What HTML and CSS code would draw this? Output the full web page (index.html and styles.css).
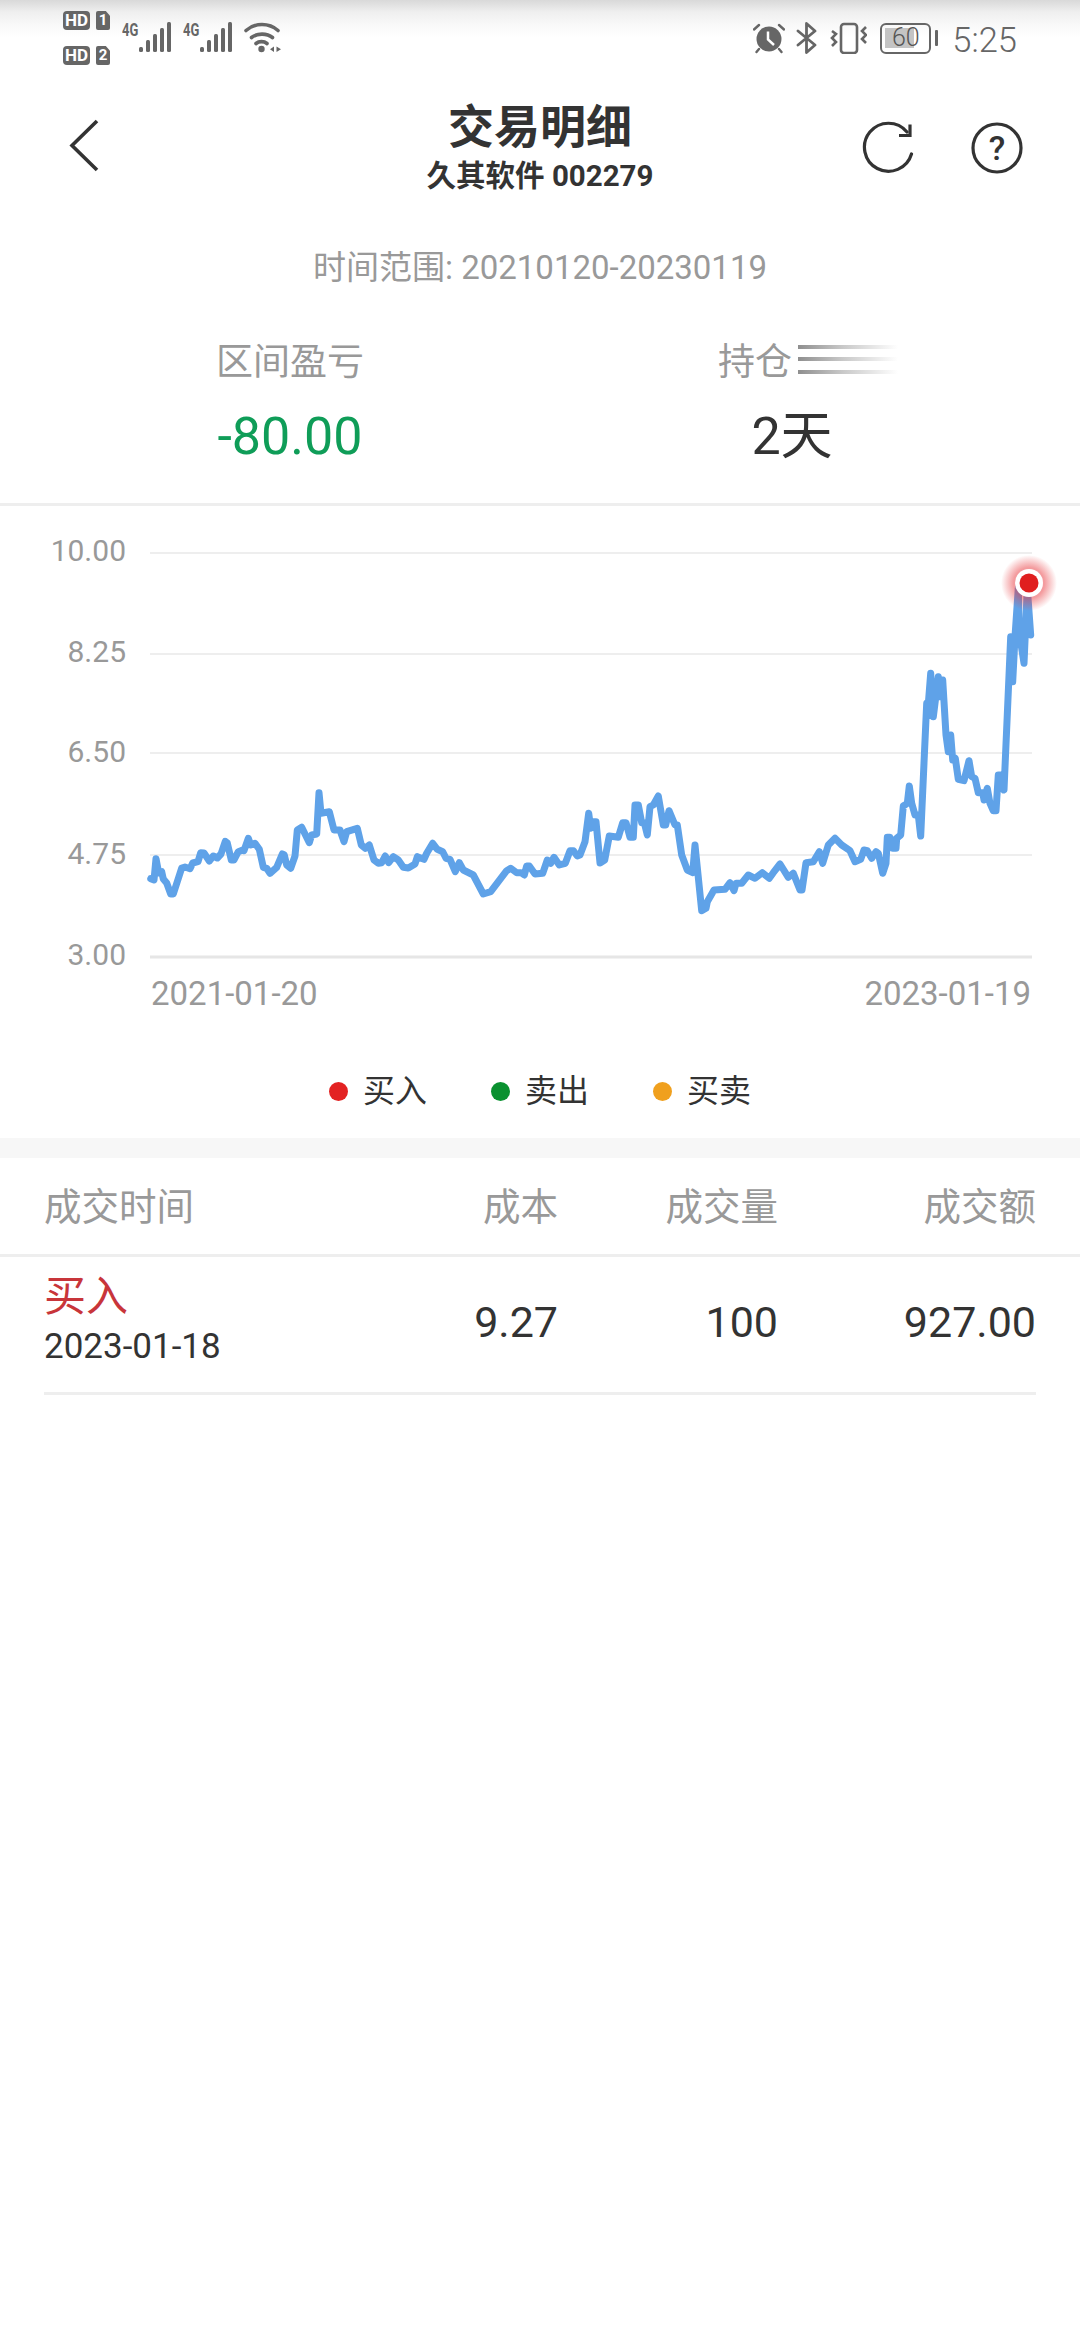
FILE: index.html
```html
<!DOCTYPE html>
<html lang="zh-CN">
<head>
    <meta charset="UTF-8">
    <meta name="viewport" content="width=device-width, initial-scale=1.0">
    <title>交易明细</title>
    <link rel="stylesheet" href="styles.css">
</head>
<body>
    <div class="status-bar">
        <div class="status-left">
            <div class="sims">
                <div class="sim"><span class="hd">HD</span><span class="sim-no">1</span></div>
                <div class="sim"><span class="hd">HD</span><span class="sim-no">2</span></div>
            </div>
            <div class="net">
                <span class="net-type">4G</span>
                <svg class="bars" width="33" height="30" viewBox="0 0 33 30">
                    <rect x="0" y="25" width="4" height="5" rx="1.5"/>
                    <rect x="7" y="18" width="4" height="12" rx="1.5"/>
                    <rect x="14" y="12" width="4" height="18" rx="1.5"/>
                    <rect x="21" y="6" width="4" height="24" rx="1.5"/>
                    <rect x="28" y="0" width="4" height="30" rx="1.5"/>
                </svg>
            </div>
            <div class="net">
                <span class="net-type">4G</span>
                <svg class="bars" width="33" height="30" viewBox="0 0 33 30">
                    <rect x="0" y="25" width="4" height="5" rx="1.5"/>
                    <rect x="7" y="18" width="4" height="12" rx="1.5"/>
                    <rect x="14" y="12" width="4" height="18" rx="1.5"/>
                    <rect x="21" y="6" width="4" height="24" rx="1.5"/>
                    <rect x="28" y="0" width="4" height="30" rx="1.5"/>
                </svg>
            </div>
            <svg class="wifi" width="38" height="31" viewBox="0 0 38 31">
                <path d="M2 8.5C11 .5 25 .5 34 8.5M7.5 15.5C13 11 23 11 28.5 15.5M12 21.5C15 19 20 19 23 21.5" fill="none" stroke="#666" stroke-width="3.6" stroke-linecap="round"/>
                <circle cx="17.5" cy="27" r="3.2" fill="#666"/>
                <path d="M30 24.5V30L26 27.2ZM32.5 24.5V30L37 27.2Z" fill="#666"/>
            </svg>
        </div>
        <div class="status-right">
            <svg width="32" height="32" viewBox="0 0 32 32">
                <circle cx="16" cy="17" r="12.5" fill="#666"/>
                <path d="M15 9.5V17.5L21 23" fill="none" stroke="#fff" stroke-width="2.5"/>
                <path d="M1 7.5L6 3M31 7.5L26 3M6 27L3.5 30M26 27L28.5 30" fill="none" stroke="#666" stroke-width="2.4" stroke-linecap="round"/>
            </svg>
            <svg class="bt" width="22" height="32" viewBox="0 0 22 32">
                <path d="M2 9L19 23L10.5 30.5V1.5L19 9L2 23" fill="none" stroke="#666" stroke-width="2.8" stroke-linejoin="round" stroke-linecap="round"/>
            </svg>
            <svg class="vibrate" width="37" height="32" viewBox="0 0 37 32">
                <rect x="11" y="2" width="16" height="29" rx="3" fill="none" stroke="#666" stroke-width="2.6"/>
                <path d="M2 9L6 12L2 16L6 20L2 24M36 5L32 9L36 13L32 17L36 21" fill="none" stroke="#666" stroke-width="2.6"/>
            </svg>
            <div class="battery">
                <div class="battery-body">
                    <div class="battery-level"></div>
                    <span class="battery-text">60</span>
                </div>
                <div class="battery-tip"></div>
            </div>
            <span class="clock">5:25</span>
        </div>
    </div>

    <header class="nav">
        <div class="nav-left">
            <svg width="32" height="54" viewBox="0 0 32 54">
                <path d="M28 2L3 26.5L28 51" fill="none" stroke="#333" stroke-width="3.6"/>
            </svg>
        </div>
        <div class="nav-title">
            <h1>交易明细</h1>
            <p>久其软件 002279</p>
        </div>
        <div class="nav-right">
            <svg width="54" height="54" viewBox="0 0 54 54">
                <path d="M49.5 33A24 24 0 1 1 45 11" fill="none" stroke="#333" stroke-width="3.2" stroke-linecap="round"/>
                <path d="M37 14.5H48V3.5" fill="none" stroke="#333" stroke-width="3.2"/>
            </svg>
            <svg width="54" height="54" viewBox="0 0 54 54">
                <circle cx="27" cy="27" r="24" fill="none" stroke="#333" stroke-width="3.2"/>
                <text class="help-mark" x="27" y="39">?</text>
            </svg>
        </div>
    </header>

    <p class="range">时间范围: 20210120-20230119</p>

    <section class="stats">
        <div class="stat">
            <div class="stat-label">区间盈亏</div>
            <div class="stat-value down">-80.00</div>
        </div>
        <div class="stat">
            <div class="stat-label">持仓<span class="smear"><i></i><i></i><i></i></span></div>
            <div class="stat-value">2天</div>
        </div>
    </section>

    <section class="chart">
        <svg class="chart-svg" width="1080" height="554" viewBox="0 506 1080 554">
            <defs>
                <radialGradient id="glow">
                    <stop offset="0.55" stop-color="#e8383d" stop-opacity="0.5"/>
                    <stop offset="1" stop-color="#e8383d" stop-opacity="0"/>
                </radialGradient>
            </defs>
            <g class="grid">
                <line x1="150" y1="553" x2="1032" y2="553"/>
                <line x1="150" y1="654" x2="1032" y2="654"/>
                <line x1="150" y1="753" x2="1032" y2="753"/>
                <line x1="150" y1="855" x2="1032" y2="855"/>
                <line class="grid-base" x1="150" y1="957" x2="1032" y2="957"/>
            </g>
            <g class="y-labels">
                <text x="126" y="561">10.00</text>
                <text x="126" y="662">8.25</text>
                <text x="126" y="762">6.50</text>
                <text x="126" y="864">4.75</text>
                <text x="126" y="965">3.00</text>
            </g>
            <text class="x-label" x="151" y="1005">2021-01-20</text>
            <text class="x-label" x="1031" y="1005" text-anchor="end">2023-01-19</text>
            <polyline class="price-line" points="150.7,878.7 154,880 156,858.7 158.7,873 161.7,871.7 163.3,879 166.7,883 170.7,894 173.3,894 181.7,868 185,867 190,868.7 192.7,863 198,861.7 200.7,852.7 204,853 209.3,861 213.3,856 217.3,858 221,854 225.3,841.3 227.3,843 231.3,860 234,860 238.3,851.7 242.7,850 244,850.7 248.3,838.3 250.7,845 255,843.3 259.3,849.3 263.3,867.3 266.7,868.3 270,873.3 276.7,867.3 282.3,854 284.3,855 286.7,865 290.7,868.3 295,856 297.3,830 301.7,827.3 309.3,842.7 311.7,835 316.7,834 319,792.7 321,813.3 329.3,811.7 334,830 340,830 344,841.7 346.7,831.7 357.3,828.3 361.3,845 365.3,848.3 369.3,845 374,860 378.3,863.3 381.7,862.7 385.3,856 388.7,862.7 393.3,856.7 398.3,860 403.3,867.3 408.3,868 415,864 417.3,856.7 424,859.3 426.7,853.3 432.7,843.3 437.3,849.3 442.7,851.7 446,858.3 450,859.3 455.3,871.7 459.3,862.7 463.3,870 473.3,875 483.3,894 490.7,891.7 506.7,870.7 510.7,868.3 516.7,872.7 521,872.7 524.3,875 526.7,866 529.3,866 535,874 542.7,873.3 547.3,860 550.7,863.3 554,857.3 559.3,865 565.3,863.3 570,850.7 573.3,850.7 577.3,856 580,855 585,841.7 588.7,813.3 590.7,828.3 593.3,821.7 596,821.7 600,863 604.7,860 609.3,836 618.3,837.3 622.7,822.7 626,822.7 630,837.3 633.3,837.3 635,805 638.3,805 641.7,822.7 644.3,822.7 647.3,835 650,806.7 653.3,805 658.3,796 663.3,825 665.7,825 669,810.7 675,825 677.3,825 681.7,855 687.3,870 692.7,872.7 695,845 701.7,910.7 706,908.3 707.3,901.7 714,890 725,889.3 730,882.7 734,890.7 736,883.3 741.7,883.3 748.3,875 755,878.3 762.3,872.7 769.3,878.3 773.3,872.7 780,864 788.3,877.3 793.3,873.3 800,890 802,890 806,862.7 813.3,861.7 819.3,851.7 822.7,863.3 828.3,845 835,838.3 841.7,845 850,850.7 855,861.7 860.7,859.3 864,850 867.3,850.7 871.7,858.3 876,851.7 878.3,853.3 882.7,873.3 886,863.3 887.3,837.3 890,837.3 892.7,848.3 896,848.3 896.7,838.3 900.7,835 903.3,806 907.3,803.3 909.3,786 911.7,803.3 915,815 918.3,815 920.7,836 926.7,703.3 927.3,716.7 930.7,673.3 933.3,716.7 938.3,676.7 940,696.7 942.7,680 946,735 948.3,751.7 950.7,735 952.7,760 955.3,758.3 958.3,779.3 964,780.7 969,760.7 971.7,776.7 975,778.3 978.3,792.7 982.7,792.7 984,800 987.3,788.3 990,803.3 993.3,810.7 996,810.7 998.3,775 1001,775 1004,790 1010.7,636.7 1012.7,681.7 1015,636.7 1018.3,588.3 1019.3,633 1024,663.3 1027.3,588 1030.7,635"/>
            <circle cx="1029" cy="583" r="28" fill="url(#glow)"/>
            <circle cx="1029" cy="583" r="14" fill="#fff"/>
            <circle cx="1029" cy="583" r="9.5" fill="#e01f1f"/>
        </svg>
        <div class="legend">
            <span class="legend-item"><i class="dot buy"></i>买入</span>
            <span class="legend-item"><i class="dot sell"></i>卖出</span>
            <span class="legend-item"><i class="dot both"></i>买卖</span>
        </div>
    </section>

    <div class="band"></div>

    <div class="table-head">
        <span>成交时间</span>
        <span class="num">成本</span>
        <span class="num">成交量</span>
        <span class="num">成交额</span>
    </div>
    <div class="table-row">
        <div>
            <div class="trade-type">买入</div>
            <div class="trade-date">2023-01-18</div>
        </div>
        <span class="num">9.27</span>
        <span class="num">100</span>
        <span class="num">927.00</span>
    </div>
</body>
</html>
```

FILE: styles.css
```css
* {
    margin: 0;
    padding: 0;
    box-sizing: border-box;
}

body {
    font-family: Roboto, "Noto Sans CJK SC", sans-serif;
    background-color: #fff;
    color: #333;
    width: 1080px;
    height: 2340px;
    overflow: hidden;
}

/* status bar */
.status-bar {
    height: 76px;
    padding: 11px 63px 0 63px;
    display: flex;
    justify-content: space-between;
    align-items: flex-start;
    background: linear-gradient(#d9d9d9 0, #dedede 3px, #efefef 12px, #f8f8f8 24px, #fff 38px);
}

.status-left {
    display: flex;
    align-items: flex-start;
}

.sims {
    display: flex;
    flex-direction: column;
    gap: 16px;
    margin-right: 12px;
}

.sim {
    display: flex;
    gap: 6px;
}

.hd {
    width: 27px;
    height: 19px;
    border-radius: 4px;
    background-color: #666;
    color: #fff;
    font-size: 17px;
    line-height: 19px;
    font-weight: bold;
    text-align: center;
}

.sim-no {
    width: 14px;
    height: 19px;
    background-color: #666;
    color: #fff;
    font-size: 15px;
    line-height: 19px;
    font-weight: bold;
    text-align: center;
    clip-path: polygon(0 0, 70% 0, 100% 25%, 100% 100%, 0 100%);
    border-radius: 2px;
}

.net {
    display: flex;
    margin-top: 11px;
    margin-right: 11px;
}

.net-type {
    width: 17px;
    margin-top: -1px;
    font-size: 18px;
    line-height: 18px;
    font-weight: bold;
    color: #666;
    transform: scaleX(0.72);
    transform-origin: left top;
}

.bars {
    fill: #666;
}

.wifi {
    margin-top: 11px;
}

.status-right {
    display: flex;
    align-items: center;
    height: 32px;
    margin-top: 11px;
}

.bt {
    margin-left: 11px;
}

.vibrate {
    margin-left: 12px;
}

.battery {
    display: flex;
    align-items: center;
    margin-left: 13px;
}

.battery-body {
    position: relative;
    width: 51px;
    height: 31px;
    border: 2.5px solid #666;
    border-radius: 6px;
}

.battery-level {
    width: 60%;
    height: 20px;
    margin: 3px 0 0 3px;
    background-color: #c4c4c4;
}

.battery-text {
    position: absolute;
    top: 0;
    left: 0;
    width: 100%;
    text-align: center;
    font-size: 25px;
    line-height: 26px;
    font-weight: 300;
    color: #555;
}

.battery-tip {
    width: 3px;
    height: 16px;
    margin-left: 4px;
    border-radius: 1px;
    background-color: #666;
}

.clock {
    margin-left: 14px;
    font-size: 34.5px;
    line-height: 32px;
    font-weight: 300;
    color: #666;
    position: relative;
    top: 2px;
}

/* title row */
.nav {
    display: grid;
    grid-template-columns: 1fr auto 1fr;
    align-items: center;
    padding-top: 26px;
}

.nav-left {
    padding-left: 69px;
}

.nav-right {
    display: flex;
    justify-content: flex-end;
    gap: 54px;
    padding-right: 56px;
}

.nav-title {
    text-align: center;
}

.nav-title h1 {
    font-size: 46px;
    line-height: 50px;
    font-weight: bold;
}

.nav-title p {
    margin-top: 7px;
    font-size: 29.5px;
    line-height: 34px;
    font-weight: bold;
}

.help-mark {
    font-size: 34px;
    font-weight: 500;
    fill: #333;
    text-anchor: middle;
}

.range {
    margin-top: 55px;
    font-size: 33px;
    line-height: 40px;
    color: #999;
    text-align: center;
}

/* summary numbers */
.stats {
    display: grid;
    grid-template-columns: 1fr 1fr;
    margin-top: 53px;
    padding: 0 40px 36px;
    border-bottom: 3px solid #eee;
    text-align: center;
}

.stat + .stat {
    padding-left: 4px;
}

.stat-label {
    font-size: 37px;
    line-height: 44px;
    color: #999;
}

.stat-value {
    margin-top: 22px;
    font-size: 52px;
    line-height: 60px;
}

.down {
    color: #0f9d58;
}

.smear {
    position: relative;
    display: inline-block;
    width: 74px;
    height: 36px;
    vertical-align: top;
}

.smear i {
    position: absolute;
    left: 6px;
    width: 100px;
    height: 4px;
    background: linear-gradient(90deg, #8f8f8f, #c9c9c9 45%, rgba(200, 200, 200, 0));
}

.smear i:nth-child(1) {
    top: 4px;
}

.smear i:nth-child(2) {
    top: 16px;
}

.smear i:nth-child(3) {
    top: 29px;
}

/* chart */
.chart-svg {
    display: block;
}

.grid line {
    stroke: #eee;
    stroke-width: 2;
}

.grid .grid-base {
    stroke: #e6e6e6;
    stroke-width: 3;
}

.y-labels text {
    font-size: 30px;
    fill: #999;
    text-anchor: end;
}

.x-label {
    font-size: 33px;
    fill: #999;
}

.price-line {
    fill: none;
    stroke: #5fa2e8;
    stroke-width: 7;
    stroke-linejoin: round;
    stroke-linecap: round;
}

.legend {
    display: flex;
    justify-content: center;
    height: 78px;
    padding-top: 7px;
    gap: 64px;
    font-size: 32px;
    line-height: 48px;
}

.legend-item {
    display: flex;
    align-items: center;
    gap: 15px;
    height: 48px;
}

.dot {
    width: 19px;
    height: 19px;
    border-radius: 50%;
}

.buy {
    background-color: #e32222;
}

.sell {
    background-color: #0a9130;
}

.both {
    background-color: #f0a01e;
}

.band {
    height: 20px;
    background-color: #f7f7f7;
}

/* trade table */
.table-head,
.table-row {
    display: grid;
    grid-template-columns: 356px 158px 220px 258px;
    align-items: center;
}

.table-head {
    height: 99px;
    padding: 0 44px 5px;
    border-bottom: 3px solid #eee;
    font-size: 37.5px;
    color: #999;
}

.table-row {
    height: 138px;
    margin: 0 44px;
    padding: 15px 0 20px;
    border-bottom: 3px solid #eee;
    font-size: 43px;
}

.num {
    text-align: right;
}

.trade-type {
    font-size: 42px;
    line-height: 50px;
    color: #c8353a;
}

.trade-date {
    font-size: 35px;
    line-height: 50px;
}
```
